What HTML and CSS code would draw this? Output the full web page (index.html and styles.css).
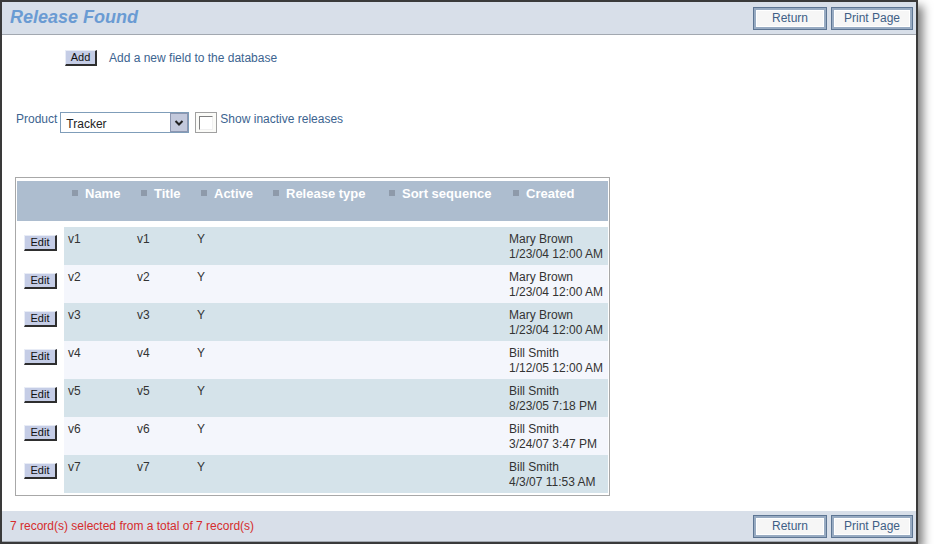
FILE: index.html
```html
<!DOCTYPE html>
<html>
<head>
<meta charset="utf-8">
<link rel="stylesheet" href="styles.css">
</head>
<body>
<div class="window">
  <div class="bar top">
    <div class="title">Release Found</div>
    <div class="btns">
      <button class="pbtn ret">Return</button>
      <button class="pbtn prt">Print Page</button>
    </div>
  </div>
  <div class="content">
    <div class="addrow">
      <button class="sbtn add">Add</button>
      <span class="addtext">Add a new field to the database</span>
    </div>
    <div class="prodrow">
      <span class="lbl">Product</span>
      <div class="select"><span class="selval">Tracker</span><span class="arrow"><svg width="10" height="8" viewBox="0 0 10 8"><path d="M1.5 2 L5 5.5 L8.5 2" fill="none" stroke="#222" stroke-width="2"/></svg></span></div>
      <div class="chk"><span class="chkin"></span></div>
      <span class="lbl">Show inactive releases</span>
    </div>
    <div class="tablebox">
      <table class="grid">
        <colgroup>
          <col style="width:47px"><col style="width:69px"><col style="width:60px"><col style="width:72px"><col style="width:116px"><col style="width:124px"><col style="width:103px">
        </colgroup>
        <thead>
          <tr>
            <th></th>
            <th><i class="sq"></i>Name</th>
            <th><i class="sq"></i>Title</th>
            <th><i class="sq"></i>Active</th>
            <th><i class="sq"></i>Release type</th>
            <th><i class="sq"></i>Sort sequence</th>
            <th><i class="sq"></i>Created</th>
          </tr>
        </thead>
        <tbody>
          <tr class="odd"><td class="ec"><button class="sbtn edit">Edit</button></td><td>v1</td><td>v1</td><td>Y</td><td></td><td></td><td>Mary Brown<br>1/23/04 12:00 AM</td></tr>
          <tr class="even"><td class="ec"><button class="sbtn edit">Edit</button></td><td>v2</td><td>v2</td><td>Y</td><td></td><td></td><td>Mary Brown<br>1/23/04 12:00 AM</td></tr>
          <tr class="odd"><td class="ec"><button class="sbtn edit">Edit</button></td><td>v3</td><td>v3</td><td>Y</td><td></td><td></td><td>Mary Brown<br>1/23/04 12:00 AM</td></tr>
          <tr class="even"><td class="ec"><button class="sbtn edit">Edit</button></td><td>v4</td><td>v4</td><td>Y</td><td></td><td></td><td>Bill Smith<br>1/12/05 12:00 AM</td></tr>
          <tr class="odd"><td class="ec"><button class="sbtn edit">Edit</button></td><td>v5</td><td>v5</td><td>Y</td><td></td><td></td><td>Bill Smith<br>8/23/05 7:18 PM</td></tr>
          <tr class="even"><td class="ec"><button class="sbtn edit">Edit</button></td><td>v6</td><td>v6</td><td>Y</td><td></td><td></td><td>Bill Smith<br>3/24/07 3:47 PM</td></tr>
          <tr class="odd"><td class="ec"><button class="sbtn edit">Edit</button></td><td>v7</td><td>v7</td><td>Y</td><td></td><td></td><td>Bill Smith<br>4/3/07 11:53 AM</td></tr>
        </tbody>
      </table>
    </div>
  </div>
  <div class="bar bottom">
    <div class="count">7 record(s) selected from a total of 7 record(s)</div>
    <div class="btns">
      <button class="pbtn ret">Return</button>
      <button class="pbtn prt">Print Page</button>
    </div>
  </div>
</div>
</body>
</html>
```

FILE: styles.css
```css
html, body {
  margin: 0;
  padding: 0;
  background: #ffffff;
}
body {
  font-family: "Liberation Sans", Arial, sans-serif;
  font-size: 12px;
  color: #333333;
}
.window {
  box-sizing: border-box;
  width: 918px;
  height: 544px;
  border: 2px solid #3a3a3a;
  background: #ffffff;
  display: flex;
  flex-direction: column;
  box-shadow: 5px 6px 9px rgba(0, 0, 0, 0.5);
}
.bar {
  background: #d8dfe9;
  display: flex;
  align-items: center;
  justify-content: space-between;
  padding: 0 3px 0 8px;
}
.bar.top {
  height: 32px;
  border-bottom: 1px solid #a2a8b0;
}
.bar.bottom {
  height: 30px;
  border-bottom: 1px solid #a2a8b0;
  margin-top: auto;
}
.title {
  font-size: 18px;
  font-weight: bold;
  font-style: italic;
  color: #6a9bd3;
  padding-bottom: 1px;
}
.count {
  color: #d62c2c;
  font-size: 12px;
}
.btns {
  display: flex;
  gap: 4px;
}
.pbtn {
  box-sizing: border-box;
  height: 23px;
  font-family: "Liberation Sans", Arial, sans-serif;
  font-size: 12px;
  color: #3f5f86;
  background: #f6f6f6;
  border: 1px solid #5d7593;
  box-shadow: inset 0 0 0 2px #98abc2, inset 0 0 0 3px #ffffff;
  padding: 0;
  margin: 0;
}
.pbtn.ret { width: 74px; }
.pbtn.prt { width: 82px; }
.content {
  flex: 1;
  display: flex;
  flex-direction: column;
}
.sbtn {
  box-sizing: border-box;
  font-family: "Liberation Sans", Arial, sans-serif;
  font-size: 11px;
  color: #111;
  background: #c5cde6;
  border: 1px solid;
  border-color: #e8ecf6 #2e2e2e #2e2e2e #e8ecf6;
  border-width: 1px 2px 2px 1px;
  padding: 0;
  margin: 0;
  line-height: 13px;
  height: 16px;
}
.addrow {
  display: flex;
  align-items: center;
  margin-top: 15px;
  margin-left: 63px;
}
.add { width: 32px; }
.addtext {
  margin-left: 12px;
  color: #3c6490;
}
.prodrow {
  display: flex;
  align-items: flex-start;
  margin-top: 46px;
  margin-left: 14px;
}
.lbl {
  color: #3c6490;
  margin-top: 0;
}
.select {
  box-sizing: border-box;
  width: 129px;
  height: 21px;
  margin-left: 3px;
  border: 1px solid #7f9db9;
  display: flex;
  align-items: center;
  justify-content: space-between;
  background: #fff;
}
.selval {
  margin-left: 5px;
  color: #222;
  font-size: 12px;
  margin-top: 2px;
}
.arrow {
  box-sizing: border-box;
  width: 18px;
  height: 19px;
  background: #c3c9dc;
  border: 1px solid #8c96b0;
  display: flex;
  align-items: center;
  justify-content: center;
}
.chk {
  box-sizing: border-box;
  width: 22px;
  height: 21px;
  margin-left: 6px;
  margin-right: 3px;
  border: 1px solid #a0a0a0;
  background: #fbfbf8;
  display: flex;
  padding: 3px 0 0 3px;
}
.chkin {
  box-sizing: border-box;
  width: 14px;
  height: 14px;
  border: 1px solid;
  border-color: #808080 #f0f0f0 #f0f0f0 #808080;
  background: #fff;
}
.tablebox {
  align-self: flex-start;
  margin-top: 44px;
  margin-left: 13px;
  border: 1px solid #a8a8a8;
  padding: 3px 1px 2px 1px;
}
.grid {
  border-collapse: separate;
  border-spacing: 0;
  table-layout: fixed;
  width: 591px;
}
.grid th {
  background: #adbdcf;
  color: #ffffff;
  font-size: 13px;
  font-weight: bold;
  text-align: left;
  vertical-align: top;
  height: 46px;
  box-sizing: border-box;
  padding: 5px 0 0 8px;
  line-height: 15px;
  border-bottom: 6px solid #ffffff;
  white-space: nowrap;
}
.sq {
  display: inline-block;
  width: 6px;
  height: 6px;
  background: #8e9aaa;
  margin-right: 7px;
  vertical-align: 2px;
}
.grid td {
  vertical-align: top;
  height: 38px;
  box-sizing: border-box;
  padding: 5px 0 0 4px;
  line-height: 15px;
  font-size: 12px;
  color: #333;
  white-space: nowrap;
}
.grid tr.odd td { background: #d5e3ea; }
.grid tr.even td { background: #f4f6fc; }
.grid tr td.ec {
  background: #ffffff;
  padding: 8px 0 0 7px;
}
.edit { width: 33px; display: block; }
```
